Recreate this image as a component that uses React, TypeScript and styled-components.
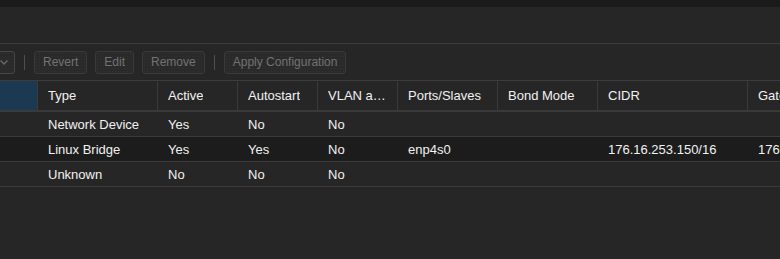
import React, { useLayoutEffect, useRef } from 'react';
import styled, { createGlobalStyle } from 'styled-components';

interface Iface {
    name: string;
    type: string;
    active: string;
    autostart: string;
    vlan: string;
    ports: string;
    bond: string;
    cidr: string;
    gateway: string;
}

const rows: Iface[] = [
    { name: 'enp4s0', type: 'Network Device', active: 'Yes', autostart: 'No', vlan: 'No', ports: '', bond: '', cidr: '', gateway: '' },
    { name: 'vmbr0', type: 'Linux Bridge', active: 'Yes', autostart: 'Yes', vlan: 'No', ports: 'enp4s0', bond: '', cidr: '176.16.253.150/16', gateway: '176.16.0.1' },
    { name: 'wlp3s0', type: 'Unknown', active: 'No', autostart: 'No', vlan: 'No', ports: '', bond: '', cidr: '', gateway: '' },
];

const columns = ['Name', 'Type', 'Active', 'Autostart', 'VLAN aware', 'Ports/Slaves', 'Bond Mode', 'CIDR', 'Gateway'];

const GlobalStyle = createGlobalStyle`
    html, body {
        margin: 0;
        padding: 0;
        background: #262626;
    }
    body {
        font-family: "Liberation Sans", Arial, sans-serif;
        font-size: 13px;
        color: #f2f2f2;
    }
`;

const Page = styled.div`
    width: 780px;
    height: 259px;
    display: flex;
    flex-direction: column;
    background: #262626;
    overflow: hidden;
`;

const TopStrip = styled.div`
    height: 7px;
    background: #1b1b1b;
`;

const Header = styled.div`
    height: 36px;
    border-bottom: 1px solid #3c3c3c;
`;

const Scroller = styled.div`
    overflow: hidden;
    flex: 1;
`;

const Content = styled.div`
    width: fit-content;
`;

const Toolbar = styled.div`
    height: 36px;
    display: flex;
    align-items: center;
    gap: 8px;
    padding-left: 40px;
    border-bottom: 1px solid #3c3c3c;
`;

const Button = styled.button<{ $width?: number }>`
    height: 23px;
    box-sizing: border-box;
    padding: 0 8px;
    display: flex;
    align-items: center;
    justify-content: space-between;
    gap: 6px;
    border: 1px solid #3a3a3a;
    border-radius: 3px;
    background-color: #2a2a2a;
    background-image: radial-gradient(#323232 0.6px, transparent 0.7px);
    background-size: 3px 3px;
    color: #727272;
    font-family: "Liberation Sans", Arial, sans-serif;
    font-size: 12px;
    white-space: nowrap;
    ${(p) => (p.$width ? `width: ${p.$width}px;` : '')}
`;

const MenuButton = styled(Button)`
    border-color: #464646;
    padding-right: 5px;
`;

const Separator = styled.div`
    width: 1px;
    height: 15px;
    background: #4f4f4f;
    margin: 0 1px;
`;

const Grid = styled.div`
    width: 1001px;
    display: grid;
    grid-template-columns: 141px 120px 80px 80px 80px 100px 100px 150px 150px;
`;

const HeadCell = styled.div<{ $sorted?: boolean }>`
    height: 31px;
    box-sizing: border-box;
    padding: 0 10px;
    display: flex;
    align-items: center;
    border-right: 1px solid #3a3a3a;
    border-bottom: 2px solid #3a3a3a;
    background: ${(p) => (p.$sorted ? '#1b3a51' : '#262626')};
    overflow: hidden;
    span {
        overflow: hidden;
        text-overflow: ellipsis;
        white-space: nowrap;
    }
`;

const Row = styled.div<{ $selected?: boolean }>`
    display: contents;
    & > div {
        background: ${(p) => (p.$selected ? '#1c1c1c' : '#262626')};
    }
`;

const Cell = styled.div`
    height: 25px;
    box-sizing: border-box;
    padding: 0 10px;
    display: flex;
    align-items: center;
    border-bottom: 1px solid #3a3a3a;
    white-space: nowrap;
    overflow: hidden;
`;

const Chevron = () => (
    <svg width="10" height="10" viewBox="0 0 10 10">
        <path d="M1.5 3.5 L5 7 L8.5 3.5" fill="none" stroke="#6a6a6a" strokeWidth="1.3" />
    </svg>
);

const App: React.FC = () => {
    const scrollRef = useRef<HTMLDivElement>(null);

    useLayoutEffect(() => {
        if (scrollRef.current) scrollRef.current.scrollLeft = 103;
    }, []);

    return (
        <Page>
            <GlobalStyle />
            <TopStrip />
            <Header />
            <Scroller ref={scrollRef}>
                <Content>
                    <Toolbar>
                        <MenuButton $width={78}>
                            Create
                            <Chevron />
                        </MenuButton>
                        <Separator />
                        <Button>Revert</Button>
                        <Button>Edit</Button>
                        <Button>Remove</Button>
                        <Separator />
                        <Button>Apply Configuration</Button>
                    </Toolbar>
                    <Grid>
                        {columns.map((c, i) => (
                            <HeadCell key={c} $sorted={i === 0}>
                                <span>{c}</span>
                            </HeadCell>
                        ))}
                        {rows.map((r, i) => (
                            <Row key={r.name} $selected={i === 1}>
                                <Cell>{r.name}</Cell>
                                <Cell>{r.type}</Cell>
                                <Cell>{r.active}</Cell>
                                <Cell>{r.autostart}</Cell>
                                <Cell>{r.vlan}</Cell>
                                <Cell>{r.ports}</Cell>
                                <Cell>{r.bond}</Cell>
                                <Cell>{r.cidr}</Cell>
                                <Cell>{r.gateway}</Cell>
                            </Row>
                        ))}
                    </Grid>
                </Content>
            </Scroller>
        </Page>
    );
};

export default App;
